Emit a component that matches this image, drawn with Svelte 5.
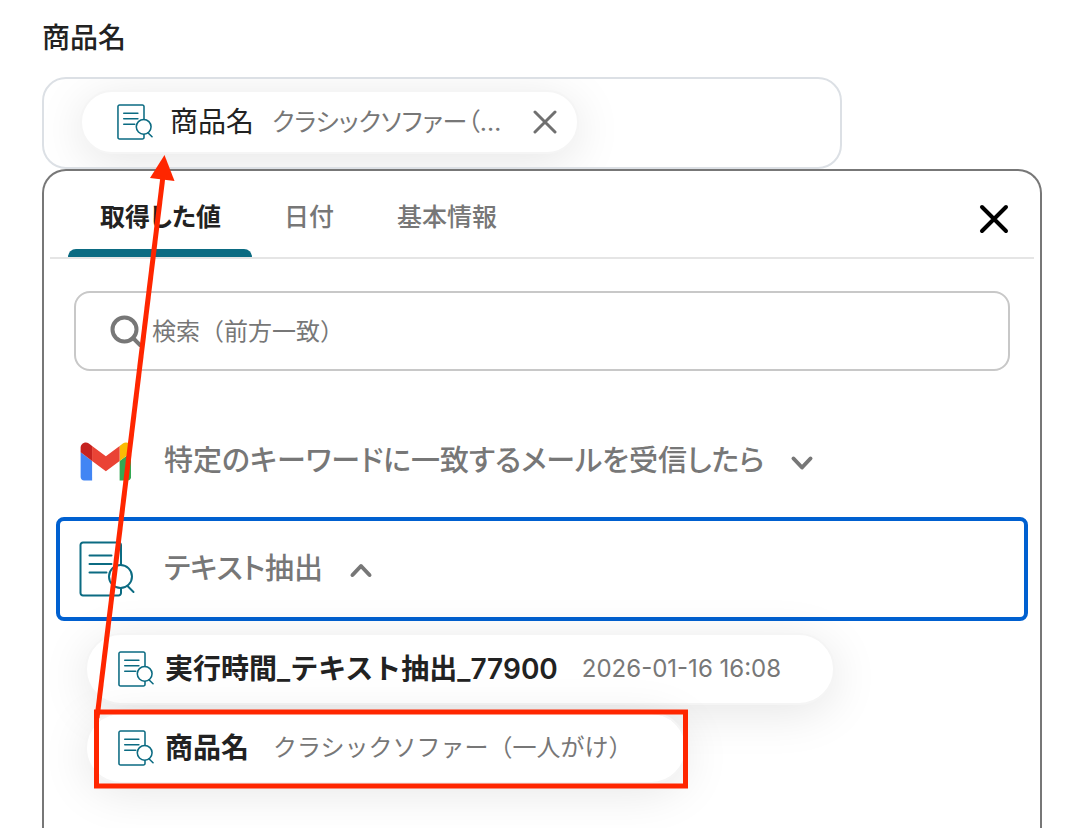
<script>
	let query = '';
	let field_value = { label: '商品名', sample: 'クラシックソファー（一人がけ）' };
	let panel_open = true;
	let active_tab = 0;
	let mail_open = false;
	let extract_open = true;

	const tabs = ['取得した値', '日付', '基本情報'];

	const outputs = [
		{ label: '実行時間_テキスト抽出_77900', sample: '2026-01-16 16:08' },
		{ label: '商品名', sample: 'クラシックソファー（一人がけ）' }
	];

	const shorten = text => text.length > 10 ? text.slice(0, 10) + '…' : text;

	$: shown = outputs.filter(o => o.label.startsWith(query));
</script>

{#snippet extract_icon(size)}
	<svg class="extract-icon" class:small={size < 40} width={size} height={size} viewBox="0 0 56 56" aria-hidden="true">
		<path d="M42 24V4a2.500 2.500 0 0 0-2.500-2.500H4A2.500 2.500 0 0 0 1.500 4v48A2.500 2.500 0 0 0 4 54.500h35.500A2.500 2.500 0 0 0 42 52v-4.500"/>
		<path d="M10.500 14.500h22M10.500 23h22M10.500 31.500h17"/>
		<circle cx="41.500" cy="35.500" r="11.500"/>
		<path d="M48.500 45l6 6"/>
	</svg>
{/snippet}

{#snippet chevron(open)}
	<svg width="24" height="24" viewBox="0 0 24 24" aria-hidden="true">
		<path d={open ? 'M3.500 18l8.500-9 8.500 9' : 'M3.500 9.500l8.500 9 8.500-9'}/>
	</svg>
{/snippet}

<div class="page">
	<h2>商品名</h2>

	<div class="field">
		{#if field_value}
			<div class="chip selected">
				{@render extract_icon(36)}
				<span class="name">{field_value.label}</span>
				<span class="sample">{shorten(field_value.sample)}</span>
				<button class="remove" aria-label="削除" on:click={() => field_value = null}>
					<svg width="24" height="24" viewBox="0 0 24 24" aria-hidden="true">
						<path d="M2 2l20 20M22 2L2 22"/>
					</svg>
				</button>
			</div>
		{/if}
	</div>

	{#if panel_open}
		<section class="panel">
			<header>
				<div class="tabs" role="tablist">
					{#each tabs as tab, i}
						<button role="tab" aria-selected={i === active_tab} class:active={i === active_tab} on:click={() => active_tab = i}>{tab}</button>
					{/each}
				</div>
				<button class="close" aria-label="閉じる" on:click={() => panel_open = false}>
					<svg width="32" height="32" viewBox="0 0 32 32" aria-hidden="true">
						<path d="M4 4l24 24M28 4L4 28"/>
					</svg>
				</button>
			</header>

			<label class="search">
				<svg width="32" height="32" viewBox="0 0 32 32" aria-hidden="true">
					<circle cx="14.500" cy="14.500" r="12"/>
					<path d="M23 23l8 8"/>
				</svg>
				<input type="text" aria-label="検索" placeholder="検索（前方一致）" bind:value={query}>
			</label>

			<div class="groups">
				<button class="group" aria-expanded={mail_open} on:click={() => mail_open = !mail_open}>
					<span class="logo">
						<svg width="52" height="39" viewBox="49.500 41 90 68" aria-hidden="true">
							<path fill="#4285f4" d="M58 108h14V74L52 59v43c0 3.320 2.690 6 6 6"/>
							<path fill="#34a853" d="M120 108h14c3.320 0 6-2.690 6-6V59l-20 15"/>
							<path fill="#fbbc04" d="M120 48v26l20-15v-8c0-7.420-8.470-11.650-14.400-7.200"/>
							<path fill="#ea4335" d="M72 74V48l24 18 24-18v26L96 92"/>
							<path fill="#c5221f" d="M52 51v8l20 15V48l-5.600-4.200c-5.940-4.450-14.400-.220-14.400 7.200"/>
						</svg>
					</span>
					<span>特定のキーワードに一致するメールを受信したら</span>
					<span class="chevron">{@render chevron(mail_open)}</span>
				</button>

				<button class="group current" aria-expanded={extract_open} on:click={() => extract_open = !extract_open}>
					<span class="logo">{@render extract_icon(56)}</span>
					<span>テキスト抽出</span>
					<span class="chevron">{@render chevron(extract_open)}</span>
				</button>
			</div>

			{#if extract_open}
				<div class="outputs">
					{#each shown as output}
						<button class="chip" on:click={() => field_value = output}>
							{@render extract_icon(36)}
							<span class="name">{output.label}</span>
							<span class="sample">{output.sample}</span>
						</button>
					{/each}
				</div>
			{/if}
		</section>
	{/if}

	<!-- red frame and arrow drawn over the form -->
	<svg class="guide" width="700" height="800" viewBox="0 0 700 800" aria-hidden="true">
		<rect x="96.500" y="712" width="589" height="74"/>
		<path d="M97 718L163 176"/>
		<path class="head" d="M164.500 155L174.500 181L150 178Z"/>
	</svg>
</div>

<style>
	:global(body) {
		background: #fff;
	}

	.page {
		position: relative;
		display: flex;
		flex-direction: column;
		box-sizing: border-box;
		min-height: 100vh;
		padding: 16px 48px 0 42px;
		font-family: Inter, "Noto Sans CJK JP", sans-serif;
		font-size: 28px;
		line-height: 44px;
		color: #222;
	}

	h2 {
		margin: 0 0 17px;
		font-size: 28px;
		font-weight: 500;
	}

	button {
		display: flex;
		align-items: center;
		margin: 0;
		padding: 0;
		border: none;
		background: none;
		color: inherit;
		font: inherit;
		text-align: left;
		cursor: pointer;
	}

	svg {
		flex: none;
		display: block;
		fill: none;
		stroke-linecap: round;
		stroke-linejoin: round;
	}

	.extract-icon {
		stroke: #0b6b82;
		stroke-width: 2;
	}

	.small {
		stroke-width: 2.4;
	}

	.field {
		display: flex;
		box-sizing: border-box;
		width: 100%;
		max-width: 800px;
		min-height: 92px;
		padding: 11px 36px 13px;
		border: 2px solid #dce0e5;
		border-radius: 24px;
		overflow: hidden;
	}

	.chip {
		display: flex;
		align-items: center;
		box-sizing: border-box;
		height: 72px;
		padding: 0 52px 0 31px;
		border: 2px solid #f5f5f5;
		border-radius: 36px;
		background: #fff;
		background-clip: padding-box;
		box-shadow: 0 8px 48px rgba(0, 0, 0, 0.1);
		white-space: nowrap;
	}

	.name {
		margin: 0 24px 0 11px;
		font-weight: 600;
	}

	.sample {
		color: #777;
		font-size: 24px;
		font-weight: 400;
	}

	.selected {
		height: 64px;
		padding: 0 20px 0 35px;
	}

	.selected .name {
		margin: 0 18px 0 17px;
		font-weight: 400;
	}

	.selected .sample {
		font-size: 25px;
		font-feature-settings: "palt";
	}

	.remove {
		margin-left: 32px;
	}

	.remove svg {
		stroke: #707070;
		stroke-width: 3;
	}

	.panel {
		flex: 1;
		border: 2px solid #777;
		border-bottom: none;
		border-radius: 24px 24px 0 0;
		background: #fff;
	}

	header {
		display: flex;
		justify-content: space-between;
		margin: 0 6px;
		padding: 0 16px 0 18px;
		border-bottom: 2px solid #e5e5e5;
	}

	.tabs {
		display: flex;
	}

	.tabs button {
		position: relative;
		height: 86px;
		padding: 5px 31px 0 32px;
		color: #777;
		font-size: 25px;
		font-weight: 500;
		font-feature-settings: "palt";
	}

	.tabs .active {
		color: #222;
		font-weight: 600;
	}

	.tabs .active::after {
		content: '';
		position: absolute;
		left: 0;
		right: 0;
		bottom: 0;
		height: 8px;
		border-radius: 8px 8px 0 0;
		background: #0b6b82;
	}

	.close {
		justify-content: center;
		width: 48px;
		height: 48px;
		margin-top: 24px;
	}

	.close svg {
		stroke: #000;
		stroke-width: 4;
	}

	.search {
		display: flex;
		align-items: center;
		gap: 10px;
		box-sizing: border-box;
		height: 80px;
		margin: 32px 30px 38px;
		padding: 0 34px;
		border: 2px solid #c8c8c8;
		border-radius: 16px;
	}

	.search svg {
		stroke: #777;
		stroke-width: 4;
	}

	.search input {
		flex: 1;
		min-width: 0;
		padding: 2px 0 0;
		border: none;
		outline: none;
		background: none;
		color: #222;
		font: inherit;
		font-size: 24px;
	}

	.search input::placeholder {
		color: #777;
		opacity: 1;
	}

	.groups {
		display: flex;
		flex-direction: column;
		gap: 4px;
		margin: 0 12px;
	}

	.group {
		box-sizing: border-box;
		width: 100%;
		height: 104px;
		padding: 0 19px;
		border: 4px solid transparent;
		border-radius: 8px;
		color: #777;
		font-size: 29px;
		font-weight: 500;
		font-feature-settings: "palt";
	}

	.current {
		border-color: #0060d0;
	}

	.logo {
		width: 56px;
		margin-right: 29px;
	}

	.chevron {
		margin-left: 26px;
	}

	.chevron svg {
		stroke: #777;
		stroke-width: 4;
	}

	.outputs {
		display: flex;
		flex-direction: column;
		align-items: flex-start;
		gap: 7px;
		padding: 12px 41px 44px;
	}

	.guide {
		position: absolute;
		top: 0;
		left: 0;
		stroke: #ff2600;
		stroke-width: 5;
		stroke-linecap: butt;
		stroke-linejoin: miter;
		pointer-events: none;
	}

	.guide .head {
		fill: #ff2600;
		stroke: none;
	}
</style>
